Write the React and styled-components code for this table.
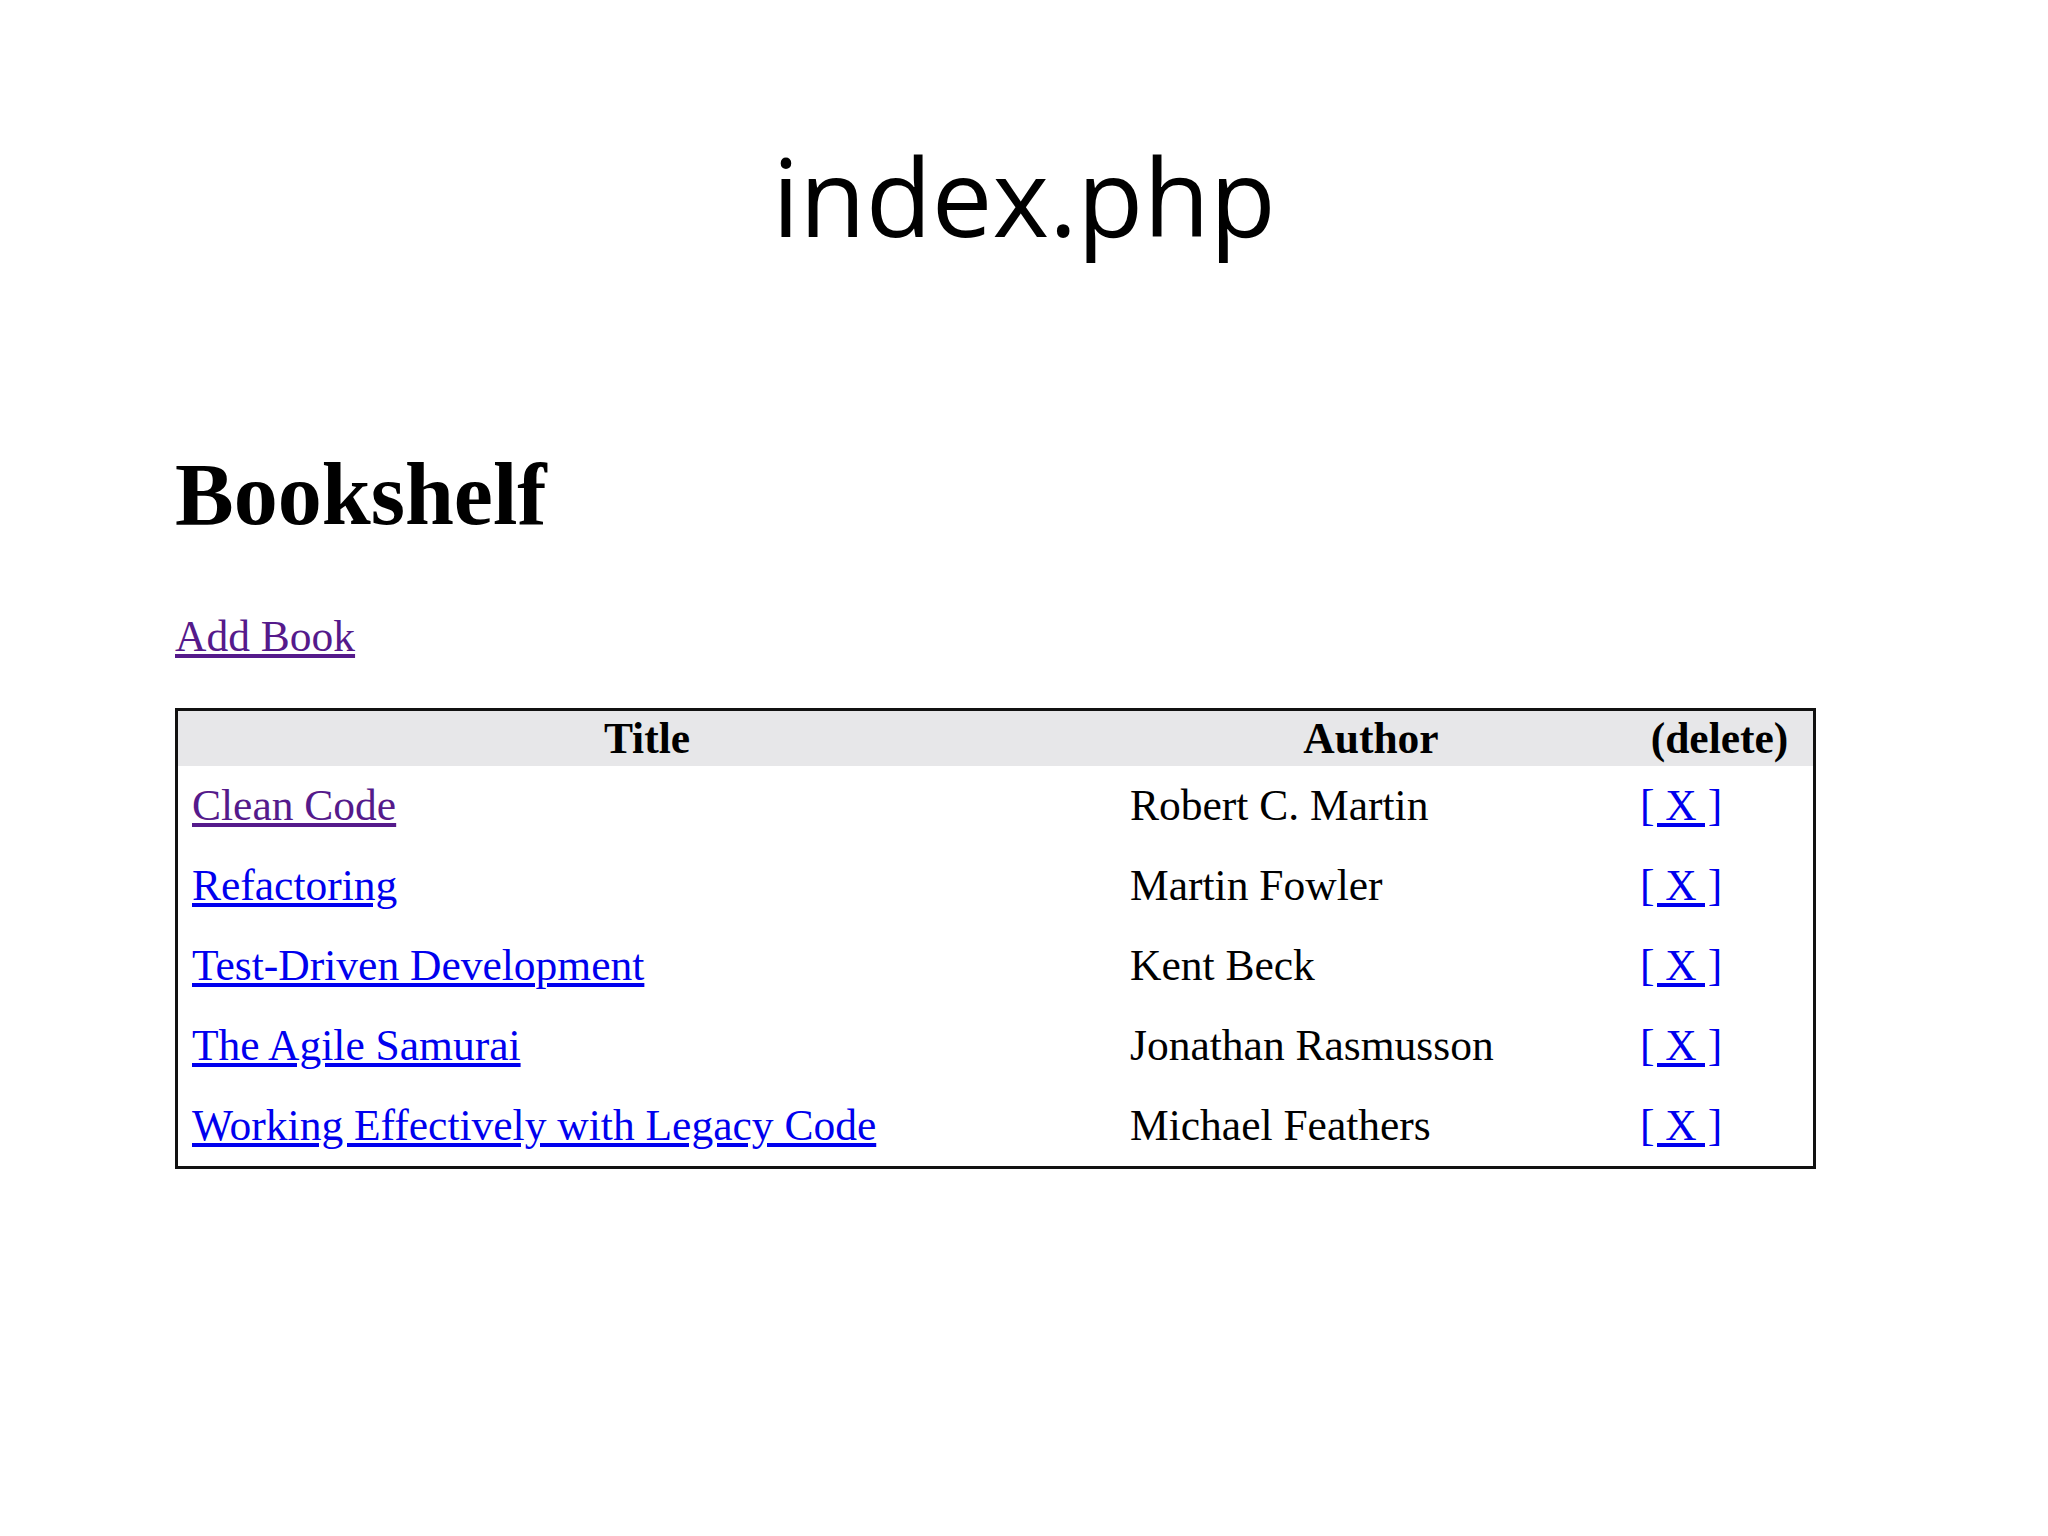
import React from 'react';
import styled, { createGlobalStyle } from 'styled-components';

const books = [
  { title: 'Clean Code', author: 'Robert C. Martin', visited: true },
  { title: 'Refactoring', author: 'Martin Fowler' },
  { title: 'Test-Driven Development', author: 'Kent Beck' },
  { title: 'The Agile Samurai', author: 'Jonathan Rasmusson' },
  { title: 'Working Effectively with Legacy Code', author: 'Michael Feathers' },
];

const columns = [
  { label: 'Title', width: 938 },
  { label: 'Author', width: 510 },
  { label: '(delete)', width: 187 },
];

const App = () => (
  <>
    <GlobalStyle />
    <Slide>
      <SlideTitle>index.php</SlideTitle>

      <Shot>
        <PageHeading>Bookshelf</PageHeading>
        <AddRow>
          <PageLink href="#" $visited>Add Book</PageLink>
        </AddRow>

        <BookTable>
          <colgroup>
            {columns.map((c) => (
              <col key={c.label} style={{ width: c.width }} />
            ))}
          </colgroup>
          <thead>
            <tr>
              {columns.map((c) => (
                <HeadCell key={c.label}>{c.label}</HeadCell>
              ))}
            </tr>
          </thead>
          <tbody>
            {books.map((b) => (
              <tr key={b.title}>
                <Cell>
                  <PageLink href="#" $visited={b.visited}>{b.title}</PageLink>
                </Cell>
                <Cell>{b.author}</Cell>
                <Cell>
                  <PageLink href="#">[ X ]</PageLink>
                </Cell>
              </tr>
            ))}
          </tbody>
        </BookTable>
      </Shot>
    </Slide>
  </>
);

export default App;

// Styled Components

const GlobalStyle = createGlobalStyle`
  html, body {
    margin: 0;
    background: #fff;
  }
`;

const Slide = styled.div`
  width: 2048px;
  min-height: 1536px;
  box-sizing: border-box;
  padding-top: 142px;
  background: #fff;
`;

const SlideTitle = styled.h1`
  margin: 0;
  font-family: 'Open Sans', 'Noto Sans', sans-serif;
  font-weight: 400;
  font-size: 108px;
  line-height: 108px;
  text-align: center;
  color: #000;
`;

const Shot = styled.div`
  margin-top: 201px;
  padding-left: 175px;
  font-family: 'Liberation Serif', 'Times New Roman', serif;
  color: #000;
`;

const PageHeading = styled.h2`
  margin: 0;
  font-size: 88px;
  font-weight: 700;
  line-height: 88px;
`;

const AddRow = styled.p`
  margin: 72px 0 0;
  font-size: 43.5px;
  line-height: 51px;
`;

const PageLink = styled.a`
  color: ${(p) => (p.$visited ? '#551a8b' : '#0000ee')};
  text-decoration: underline;
`;

const BookTable = styled.table`
  margin-top: 46px;
  width: 1641px;
  table-layout: fixed;
  border: 3px solid #111;
  border-spacing: 0;
  font-size: 43.5px;
`;

const HeadCell = styled.th`
  padding: 2px 14px 3px;
  line-height: 50px;
  background: #e7e7e9;
  font-weight: 700;
  text-align: center;
`;

const Cell = styled.td`
  padding: 14px 14px 15px;
  line-height: 51px;
  text-align: left;
  white-space: nowrap;
`;
